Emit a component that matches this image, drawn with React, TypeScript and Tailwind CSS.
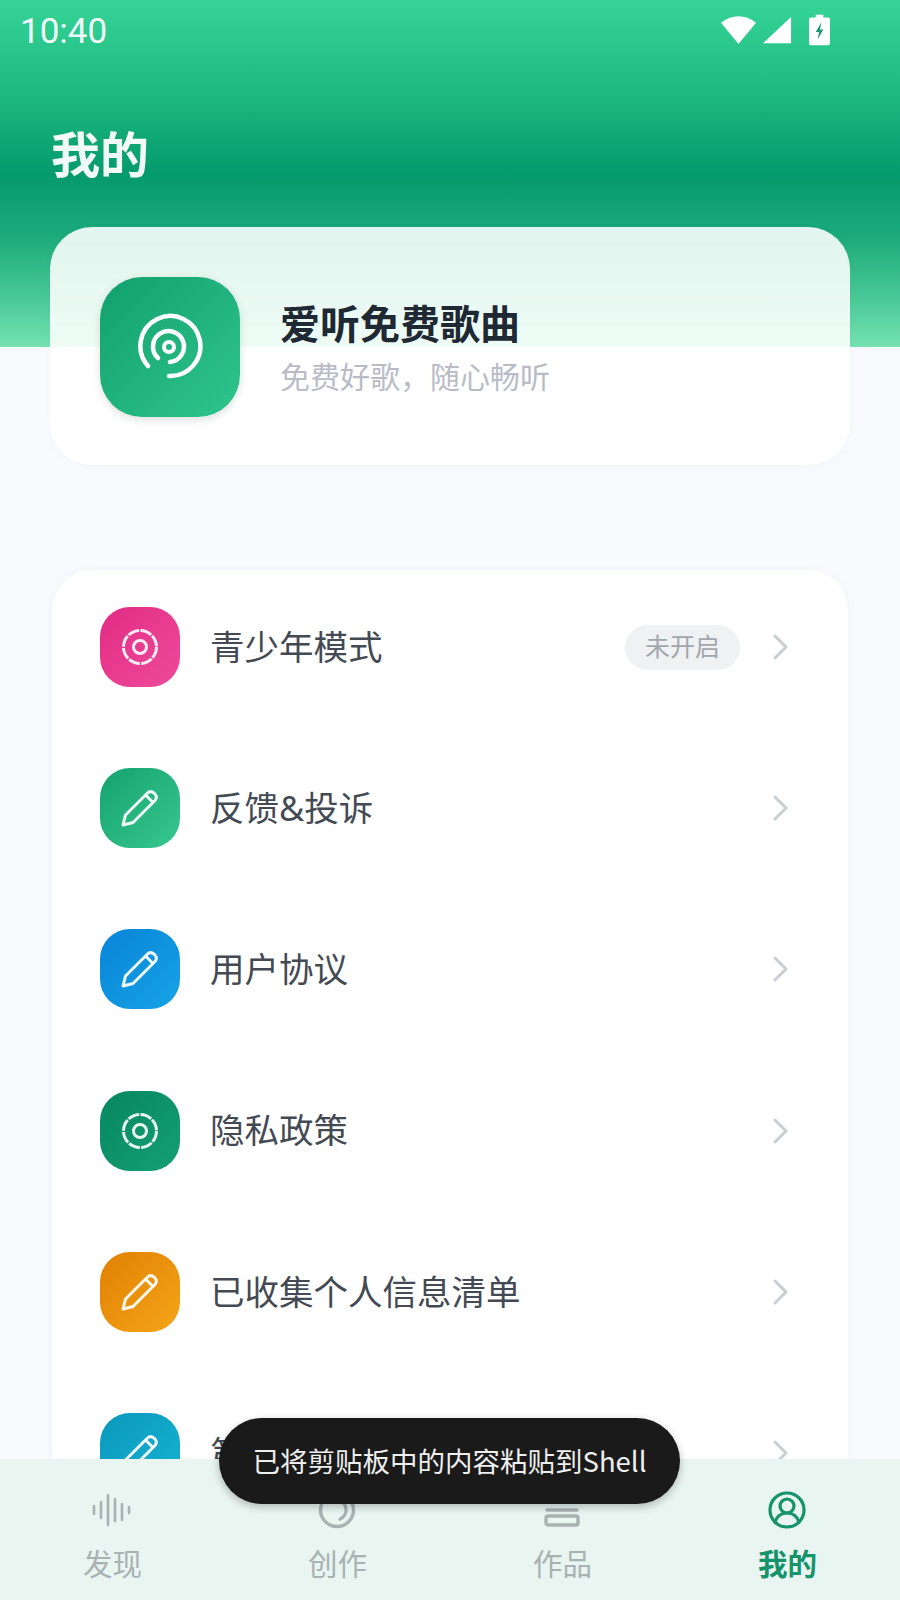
const font = { fontFamily: '"Noto Sans", "Noto Sans CJK SC", sans-serif' };

function GearIcon() {
  return (
    <svg width="40" height="40" viewBox="0 0 40 40" fill="none" stroke="white" strokeOpacity="0.9">
      <circle cx="20" cy="20" r="16.5" strokeWidth="3" strokeDasharray="11.6 1.36" />
      <circle cx="20" cy="20" r="6.5" strokeWidth="3" />
    </svg>
  );
}

function PenIcon() {
  return (
    <svg width="40" height="40" viewBox="0 0 40 40" fill="none" stroke="white" strokeOpacity="0.92" strokeWidth="3" strokeLinejoin="round" strokeLinecap="round">
      <path d="M3 37 L5.5 27 L27.5 5 Q30.5 2 34.5 5.5 Q38 9 35 12.5 L13 34.5 Z" />
      <path d="M26 7.5 L32.5 14" />
    </svg>
  );
}

const rows = [
  { label: "青少年模式", bg: "bg-gradient-to-br from-[#e22a84] to-[#ee4a9c]", icon: <GearIcon />, badge: "未开启" },
  { label: "反馈&投诉", bg: "bg-gradient-to-br from-[#12a36f] to-[#36c78f]", icon: <PenIcon /> },
  { label: "用户协议", bg: "bg-gradient-to-br from-[#0a84d8] to-[#16a3e6]", icon: <PenIcon /> },
  { label: "隐私政策", bg: "bg-gradient-to-br from-[#06875f] to-[#159f74]", icon: <GearIcon /> },
  { label: "已收集个人信息清单", bg: "bg-gradient-to-br from-[#e08004] to-[#f5a516]", icon: <PenIcon /> },
  { label: "第三方信息共享清单", bg: "bg-gradient-to-br from-[#0b98bd] to-[#16b4d2]", icon: <PenIcon /> },
];

function Row({ label, bg, icon, badge }: { label: string; bg: string; icon: React.ReactNode; badge?: string }) {
  return (
    <div className="flex h-[161.2px] shrink-0 items-start">
      <div className={`flex h-[80px] w-[80px] shrink-0 items-center justify-center rounded-[30px] ${bg}`}>{icon}</div>
      <div className="ml-[30px] flex h-[80px] flex-1 items-center pr-[58px]">
        <span className="flex-1 text-[34.5px] leading-none text-[#444a54]">{label}</span>
        {badge && (
          <span className="mr-[32px] flex h-[45px] w-[115px] items-center justify-center rounded-full bg-[#f0f1f3] text-[25px] text-[#a1a6ae]">
            {badge}
          </span>
        )}
        <svg width="18" height="26" viewBox="0 0 18 26" fill="none" stroke="#c9ced3" strokeWidth="3" strokeLinecap="round" strokeLinejoin="round">
          <path d="M3 2 L14 13 L3 24" />
        </svg>
      </div>
    </div>
  );
}

function NavItem({ label, icon, active }: { label: string; icon: React.ReactNode; active?: boolean }) {
  return (
    <div className="flex flex-col items-center">
      <div className="flex h-[40px] w-[40px] items-center justify-center">{icon}</div>
      <span className={`mt-[16px] text-[29.5px] leading-[36px] ${active ? "font-bold text-[#15936a]" : "text-[#a9b2b2]"}`}>{label}</span>
    </div>
  );
}

export default function App() {
  return (
    <div className="relative flex h-[1600px] w-[900px] flex-col overflow-hidden bg-[#f8fafd]" style={font}>
      {/* green header behind the first card */}
      <div className="absolute inset-x-0 top-0 h-[347px] bg-[linear-gradient(180deg,#36d497_0%,#1db781_28%,#059a6b_50%,#1caa7b_68%,#47c796_85%,#74e2b1_100%)]" />

      <main className="relative flex min-h-0 flex-1 flex-col overflow-hidden">
        <div className="flex h-[62px] shrink-0 items-center justify-between pl-[20px] pr-[70px]">
          <span className="text-[35px] leading-none text-white/95" style={{ fontFamily: "Roboto, sans-serif" }}>10:40</span>
          <div className="flex items-center pb-[3px]">
            <svg width="37" height="31" viewBox="0 0 38 30" fill="white"><path d="M1 8 Q19 -5 37 8 L19 30 Z" /></svg>
            <svg width="30" height="30" viewBox="0 0 32 30" fill="white" className="ml-[5px]"><path d="M31 1 V29 H1 Z" /></svg>
            <svg width="21" height="32" viewBox="0 0 22 32" className="ml-[17px]">
              <path d="M7 0 H15 V3 H20 Q22 3 22 5 V30 Q22 32 20 32 H2 Q0 32 0 30 V5 Q0 3 2 3 H7 Z" fill="white" />
              <path d="M13 8 L7 18 H10.5 L9 26 L15 15.5 H11.5 Z" fill="#1d9a70" />
            </svg>
          </div>
        </div>

        <h1 className="ml-[51px] mt-[60px] shrink-0 text-[49px] font-bold leading-[64px] text-white/95">我的</h1>

        <section className="mx-[50px] mt-[41px] flex h-[238px] shrink-0 items-start rounded-[42px] bg-white/[0.88] p-[50px] shadow-[0_2px_10px_rgba(120,140,150,0.04)]">
          <div className="flex h-[140px] w-[140px] shrink-0 items-center justify-center rounded-[42px] bg-gradient-to-br from-[#0fa06f] to-[#2fc58d] shadow-[0_3px_8px_rgba(60,90,80,0.18)]">
            <svg width="70" height="70" viewBox="0 0 70 70" fill="none" stroke="white" strokeLinecap="round" className="mr-[2px]">
              <path d="M14 54 A30 30 0 1 1 35 64" strokeWidth="4.5" />
              <path d="M24 46 A15.5 15.5 0 1 1 36 50" strokeWidth="4.5" />
              <circle cx="35" cy="35" r="5" strokeWidth="4" />
            </svg>
          </div>
          <div className="ml-[40px] mt-[21px] flex flex-col">
            <span className="text-[40px] font-bold leading-[52px] text-[#1f2933]">爱听免费歌曲</span>
            <span className="mt-[3px] text-[30px] leading-[48px] text-[#b9bcc6]">免费好歌，随心畅听</span>
          </div>
        </section>

        <section className="mx-[52px] mt-[105px] flex min-h-0 flex-1 flex-col overflow-hidden rounded-t-[40px] bg-white pl-[48px] pt-[37px] shadow-[0_0_8px_rgba(120,140,150,0.06)]">
          {rows.map((r) => (
            <Row key={r.label} {...r} />
          ))}
        </section>
      </main>

      <nav className="relative grid h-[141px] shrink-0 grid-cols-4 justify-items-center bg-[#e8f5f1] pt-[31px]">
        <NavItem
          label="发现"
          icon={
            <svg width="40" height="40" viewBox="0 0 40 40" fill="none" stroke="#a9b2b2" strokeWidth="2.6" strokeLinecap="round">
              <path d="M2 16V24M9 12V28M16 5V35M23 9V31M30 14V30M37 17V23" />
            </svg>
          }
        />
        <NavItem
          label="创作"
          icon={
            <svg width="38" height="38" viewBox="0 0 38 38" fill="none" stroke="#a9b2b2" strokeWidth="3.4" strokeLinecap="round">
              <circle cx="19" cy="19" r="16.5" />
              <path d="M20 9 A10 10 0 0 1 22 28" />
            </svg>
          }
        />
        <NavItem
          label="作品"
          icon={
            <svg width="36" height="36" viewBox="0 0 36 36" fill="none" stroke="#a9b2b2" strokeWidth="3.4" strokeLinecap="round">
              <path d="M3 6H33" />
              <path d="M3 18H33" />
              <rect x="2" y="24" width="32" height="9" rx="2" />
            </svg>
          }
        />
        <NavItem
          active
          label="我的"
          icon={
            <svg width="38" height="38" viewBox="0 0 38 38" fill="none" stroke="#15936a" strokeWidth="3.2" strokeLinecap="round">
              <circle cx="19" cy="19" r="17" />
              <circle cx="19" cy="15" r="7" />
              <path d="M7 31 Q10 22 19 22 Q28 22 31 31" />
            </svg>
          }
        />
      </nav>

      {/* toast over the nav */}
      <div className="absolute left-[219px] top-[1418px] flex h-[86px] w-[461px] items-center justify-center rounded-full bg-[#1a1a1a] text-[27.5px] leading-none text-[#eeeeee] shadow-[0_3px_8px_rgba(0,0,0,0.25)]" style={{ fontFamily: '"Noto Sans CJK SC", Roboto, sans-serif' }}>
        已将剪贴板中的内容粘贴到Shell
      </div>
    </div>
  );
}
